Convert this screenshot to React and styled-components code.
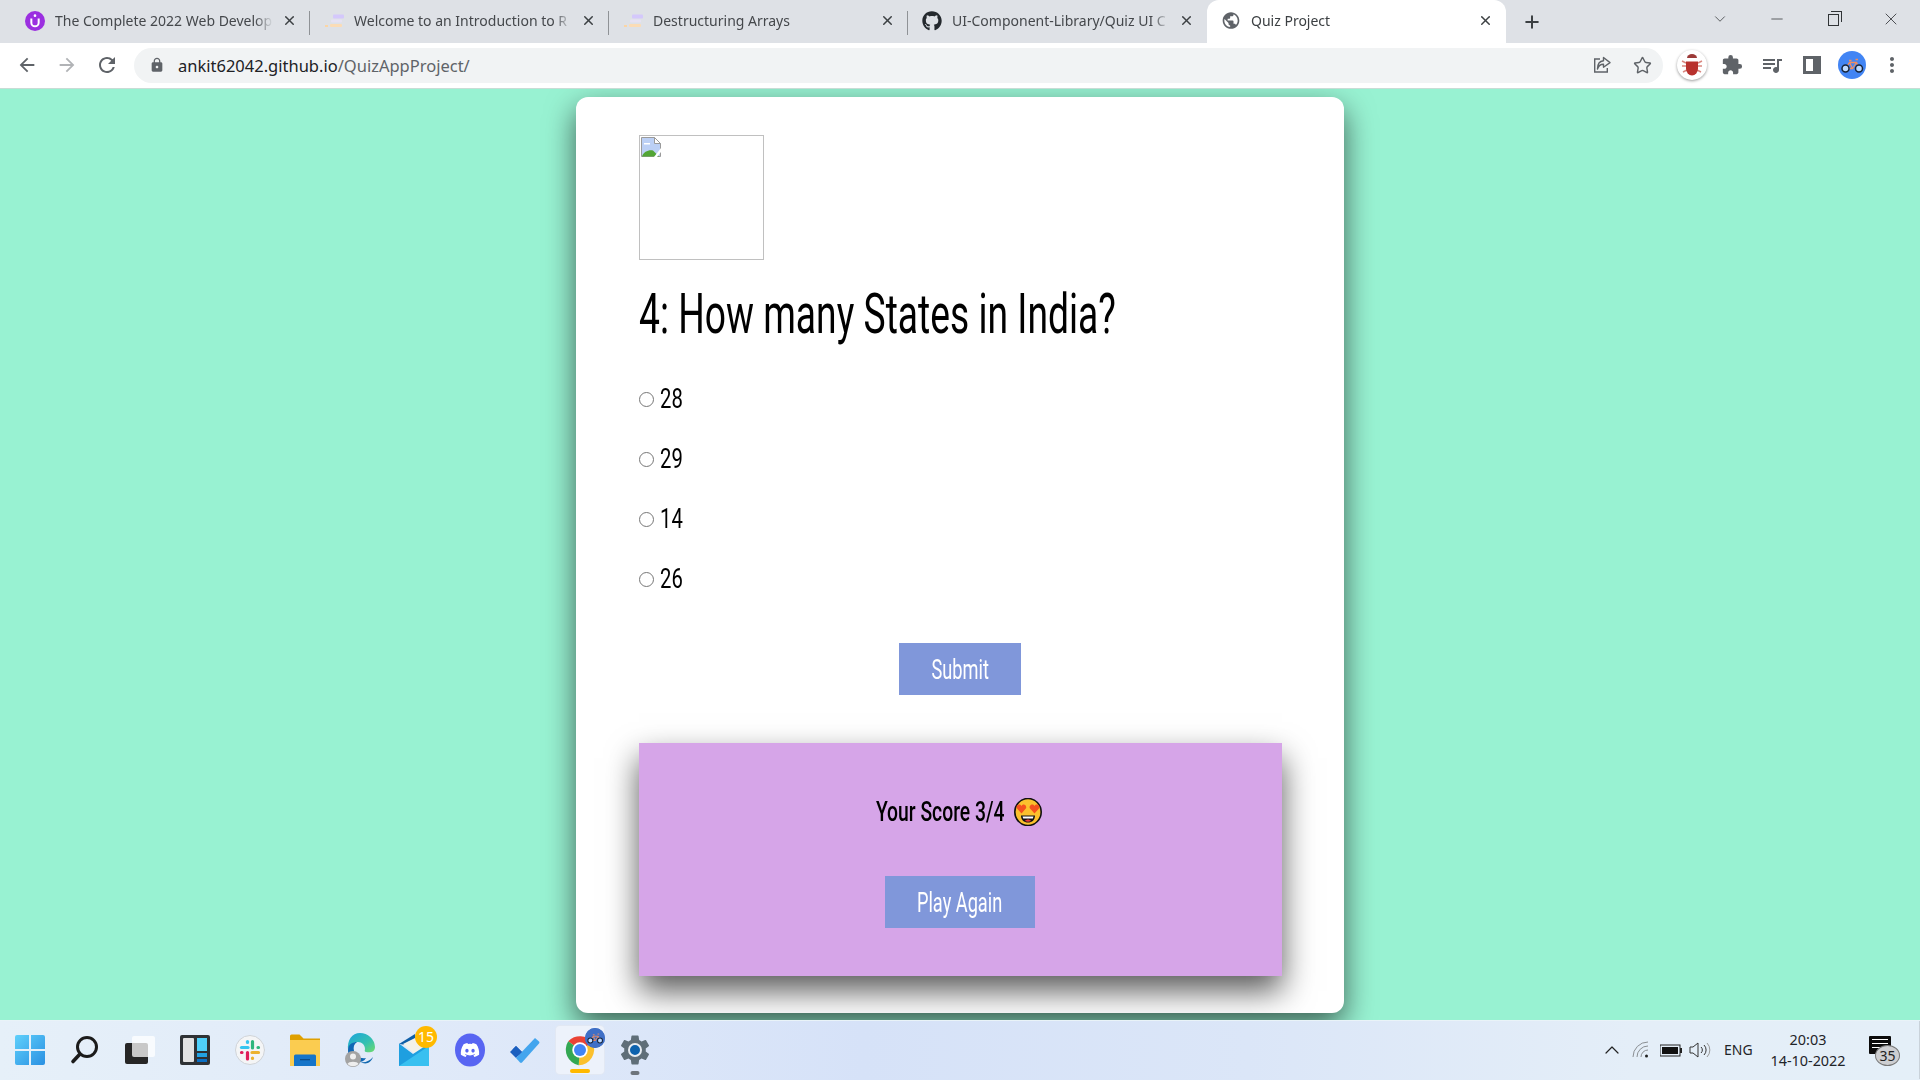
import React from "react";
import styled, { createGlobalStyle } from "styled-components";
import { X, Plus, Star, ChevronDown, ChevronUp, Minus } from "lucide-react";
import { FaGithub, FaDiscord } from "react-icons/fa";
import { MdArrowBack, MdArrowForward, MdRefresh, MdLock, MdExtension, MdQueueMusic, MdMoreVert, MdPublic, MdSettings } from "react-icons/md";

const Global = createGlobalStyle`
  html, body { margin: 0; padding: 0; width: 1920px; height: 1080px; overflow: hidden; }
  * { box-sizing: border-box; }
  body { font-family: "Noto Sans", "Open Sans", sans-serif; }
`;

const Page = styled.div`width:1920px;height:1080px;display:flex;flex-direction:column;overflow:hidden;`;
const TabStrip = styled.div`height:43px;background:#dee1e6;display:flex;padding-left:11px;flex:none;`;
const Tab = styled.div`
  position:relative;width:299px;height:43px;display:flex;align-items:center;padding:0 0 2px 14px;
  color:${p=>p.$active?"#3c4043":"#45484c"};
  background:${p=>p.$active?"#fff":"transparent"};
  border-radius:${p=>p.$active?"12px 12px 0 0":"0"};
  &::after{content:"";display:${p=>p.$sep?"block":"none"};position:absolute;right:0;top:11px;height:24px;width:1px;background:#8f9296;}
`;
const Fav = styled.span`width:20px;height:20px;display:flex;align-items:center;justify-content:center;flex:none;color:#5f6368;`;
const TabTitle = styled.span`
  margin-left:10px;width:218px;font-size:14px;white-space:nowrap;overflow:hidden;flex:none;
  -webkit-mask-image:linear-gradient(90deg,#000 calc(100% - 18px),transparent 100%);
  mask-image:linear-gradient(90deg,#000 calc(100% - 18px),transparent 100%);
`;
const TabClose = styled.span`display:flex;margin-left:9px;color:#3c4043;`;
const NewTab = styled.span`width:52px;display:flex;align-items:center;justify-content:center;color:#3c4043;`;
const StripRight = styled.div`margin-left:auto;display:flex;height:38px;align-items:center;color:#3c4043;padding-right:1px;`;
const WinBtn = styled.span`width:${p=>p.$w||57}px;display:flex;justify-content:center;color:#303336;`;
const Restore = styled.span`position:relative;width:11px;height:12px;display:block;border:1px solid #303336;margin-top:2px;
  &::before{content:"";position:absolute;left:2px;top:-4px;width:10px;height:10px;border:1px solid #303336;border-left:none;border-bottom:none;}
  &::after{content:"";position:absolute;left:2px;top:-4px;width:8px;height:3px;border-top:1px solid #303336;}
`;
const Toolbar = styled.div`height:46px;background:#fff;display:flex;align-items:center;padding-left:7px;flex:none;border-bottom:1px solid #c8dcd5;padding-bottom:1px;`;
const Slot = styled.span`width:${p=>p.$w||40}px;height:36px;display:flex;align-items:center;justify-content:center;flex:none;color:${p=>p.$c||"#5f6368"};`;
const Omni = styled.div`width:1529px;height:35px;margin:0 9px 0 7px;border-radius:18px;background:#f1f3f4;display:flex;align-items:center;padding-left:15px;flex:none;`;
const Url = styled.span`margin-left:13px;font-size:16.5px;color:#5f6368;`;
const Host = styled.span`color:#202124;`;
const OmniRight = styled.div`margin-left:auto;display:flex;margin-right:1px;`;
const BugDisc = styled.span`width:30px;height:30px;border-radius:50%;background:#fff;box-shadow:0 1px 3px rgba(0,0,0,.4);display:flex;align-items:center;justify-content:center;`;
const Main = styled.main`flex:1;background:#98f2d2;display:flex;justify-content:center;padding-top:8px;overflow:hidden;min-height:0;`;
const Card = styled.section`
  width:768px;height:916px;flex:none;background:#fff;border-radius:12px;padding:38px 62px 0 63px;
  box-shadow:0 12px 30px rgba(0,0,0,.6);
`;
const Broken = styled.div`width:125px;height:125px;border:1.5px solid #c0c0c0;padding:1px;display:flex;align-items:flex-start;`;
const Heading = styled.h1`margin:18px 0 0;height:72px;font:400 55px/72px Roboto,sans-serif;color:#000;white-space:nowrap;`;
const Squeeze = styled.span`display:inline-block;transform:scaleX(${p=>p.$x});transform-origin:${p=>p.$o||"left"} center;white-space:nowrap;`;
const Options = styled.div`margin-top:34px;display:flex;flex-direction:column;gap:30px;`;
const Option = styled.label`height:30px;display:flex;align-items:center;font:400 27px/30px Roboto,sans-serif;color:#000;`;
const Radio = styled.input`width:15px;height:15px;margin:0 6px 0 0;flex:none;`;
const Action = styled.div`display:flex;justify-content:center;padding-right:1px;`;
const Btn = styled.button`
  width:${p=>p.$w}px;height:52px;border:none;padding:2px 0 0;background:#8097da;color:#fff;
  font:400 28px/50px Roboto,sans-serif;display:flex;align-items:center;justify-content:center;
`;
const SubmitRow = styled(Action)`margin-top:49px;`;
const ScorePane = styled.div`
  margin-top:48px;height:233px;background:#d6a5e8;padding-top:52px;
  box-shadow:0 15px 30px rgba(0,0,0,.65);
`;
const ScoreLine = styled.div`display:flex;justify-content:center;align-items:center;height:34px;font:500 28px/34px Roboto,sans-serif;color:#000;padding-right:5px;`;
const ScoreText = styled.span`width:131px;display:flex;justify-content:center;margin-right:8px;`;
const AgainRow = styled(Action)`margin-top:47px;`;
const Taskbar = styled.footer`
  height:60px;flex:none;display:flex;align-items:center;padding:0 0 2px 2px;
  background:linear-gradient(90deg,#e6f0f9 0%,#dfe9f9 25%,#d6e2f8 45%,#dbe6f8 65%,#e4eef8 85%,#e4eff8 100%);
  border-top:1px solid #e9f3f8;
`;
const TaskIcon = styled.span`
  position:relative;width:55px;height:48px;flex:none;display:flex;align-items:center;justify-content:center;
`;
const ActiveTile = styled.span`position:absolute;left:4px;top:0;width:48px;height:48px;border-radius:4px;background:#edf2fb;box-shadow:0 0 0 1px #e2e8f3;`;
const Indicator = styled.span`position:absolute;bottom:${p=>p.$b}px;left:50%;transform:translateX(-50%);width:${p=>p.$w}px;height:3.5px;border-radius:2px;background:${p=>p.$c};`;
const MailBadge = styled.span`position:absolute;left:28px;top:0;width:22px;height:22px;border-radius:50%;background:#ffb900;color:#fff;font-size:14px;line-height:22px;text-align:center;`;
const ChromeBadge = styled.span`position:absolute;left:33px;top:2px;width:20px;height:20px;border-radius:50%;background:#3f6fc6;display:flex;align-items:center;justify-content:center;`;
const Tray = styled.div`margin-left:auto;display:flex;align-items:center;height:58px;border-right:1px solid #c9d2da;width:335px;padding-left:12px;font-size:14px;color:#1f2428;`;
const TrayIcon = styled.span`width:${p=>p.$w||29}px;display:flex;justify-content:center;flex:none;color:#222;`;
const Lang = styled.span`margin-left:10px;width:30px;flex:none;font-size:14px;`;
const Clock = styled.div`margin-left:15px;width:78px;text-align:center;font-size:14.4px;line-height:21px;flex:none;`;
const Notif = styled.span`position:relative;margin-left:22px;width:22px;height:18px;background:#0b0b0b;border-radius:1px;display:flex;flex-direction:column;gap:2.5px;padding:3px 3px;flex:none;margin-top:-10px;`;
const NotifLine = styled.span`height:1.5px;background:#fff;display:block;`;
const NotifBadge = styled.span`position:absolute;left:6px;top:9px;width:25px;height:21px;border-radius:50%;background:#cdced1;border:1px solid #777;font-size:14px;line-height:19px;text-align:center;color:#222;`;
const InnerDot = styled.span`position:absolute;left:11px;top:11px;width:14px;height:14px;border-radius:50%;background:#0d62ad;border:2px solid #e8edf2;`;
const GearWrap = styled.span`position:relative;display:flex;`;
const DiscordGlyph = styled.span`position:absolute;display:flex;left:17.5px;top:14px;`;
const ChromeWrap = styled.span`position:relative;display:flex;`;

const Udemy = () => (
  <svg width="20" height="20" viewBox="0 0 18 18"><circle cx="9" cy="9" r="9" fill="#9b2fe0"/><path d="M5.7 6.8v3.7a3.3 3.3 0 0 0 6.6 0V6.8" fill="none" stroke="#fff" strokeWidth="1.8"/><circle cx="9" cy="4.2" r="1.2" fill="#fff"/></svg>
);
const Stripes = () => (
  <svg width="20" height="18" viewBox="0 0 20 18"><rect x="9" y="2.5" width="11" height="4" rx="1" fill="#d4c8fb"/><rect x="7" y="7.5" width="11" height="3" rx="1" fill="#e6e2f3"/><rect x="6" y="12" width="12" height="3" rx="1" fill="#fbdcb6"/><rect x="1" y="13" width="3" height="2" fill="#fbd5a5"/></svg>
);
const Share = () => (
  <svg width="20" height="20" viewBox="0 0 20 20" fill="none" stroke="#5f6368" strokeWidth="1.4"><path d="M8 4H2.7v13h12.6v-4"/><path d="M11.5 2.5 18 7.6l-6.5 4.6V9.3C8.5 9.2 6.500 11 5.500 14c0-5 2.300-8 6-8.300z" strokeLinejoin="round"/></svg>
);
const SidePanel = () => (
  <svg width="18" height="18" viewBox="0 0 18 18"><path fillRule="evenodd" d="M0 0h18v18H0zM3 3v12h7V3z" fill="#5f6368"/></svg>
);
const Bug = () => (
  <svg width="22" height="24" viewBox="0 0 22 24" fill="none">
    <path d="M1 8l4 2M1 13h4M2 19l4-2M21 8l-4 2M21 13h-4M20 19l-4-2" stroke="#d98880" strokeWidth="1.5"/>
    <path d="M6 5a5 4 0 0 1 10 0z" fill="#9c3a38"/>
    <path d="M5 8.500h12v7a6 7 0 0 1-12 0z" fill="#b8322e"/>
  </svg>
);
const Bike = ({ s = 28, bg = "#4285f4" }) => (
  <svg width={s} height={s} viewBox="0 0 28 28">
    <circle cx="14" cy="14" r="14" fill={bg}/>
    <path d="M7.500 17.500l4-6h7l3 6M11.500 11.500l3 6h-7M17.500 8.500h2.500M11 9.500h2.500M18.500 11.500l-4 6" fill="none" stroke="#f08d60" strokeWidth="1.300"/>
    <circle cx="7.500" cy="17.500" r="3.500" fill="#bcd8ff" stroke="#16243a" strokeWidth="1.500"/><circle cx="21" cy="17.500" r="3.500" fill="#bcd8ff" stroke="#16243a" strokeWidth="1.500"/>
  </svg>
);
const BrokenImg = () => (
  <svg width="20" height="20" viewBox="0 0 20 20">
    <path d="M.5.5h13l6 6v13H.5z" fill="#bcd0f5" stroke="#9a9a9a"/>
    <path d="M13.500.5v6h6z" fill="#fff" stroke="#9a9a9a"/>
    <path d="M1 19.500c1.500-5 7-7 11-6l6 6z" fill="#52a535"/>
    <path d="M3 6h6v1.500H3z" fill="#fff"/>
    <path d="M20 11 13 20h3l4-5z" fill="#fff"/>
  </svg>
);
const Heart = () => (
  <svg width="28" height="28" viewBox="0 0 28 28">
    <ellipse cx="14" cy="14" rx="13.200" ry="13.500" fill="#fbc02d" stroke="#111" strokeWidth="1.600"/>
    <path d="M7.500 15.500 2.800 10.300C1.300 7.600 5.500 4.800 7.500 8 9.500 4.800 13.200 7.600 12 10.300z" fill="#f4511e"/>
    <path d="M20.500 15.500 15.800 10.300C14.600 7.600 18.500 4.800 20.500 8 22.500 4.800 26.700 7.600 25.200 10.300z" fill="#f4511e"/>
    <path d="M7 17.500h14c0 4.500-3 7-7 7s-7-2.500-7-7z" fill="#111"/>
    <path d="M8.500 18.500h11l-.7 2H9.200z" fill="#fff"/>
    <path d="M11 23c1-2 5-2 6 0-1.500 1-4.500 1-6 0z" fill="#e53935"/>
  </svg>
);
const Win = () => (
  <svg width="30" height="30" viewBox="0 0 30 30">
    <defs><linearGradient id="w1" x1="0" y1="0" x2="1" y2="1"><stop offset="0" stopColor="#5fd0fb"/><stop offset="1" stopColor="#2a90e2"/></linearGradient></defs>
    <path d="M2 0h12v14H0V2a2 2 0 0 1 2-2zM16 0h12a2 2 0 0 1 2 2v12H16zM0 16h14v14H2a2 2 0 0 1-2-2zM16 16h14v12a2 2 0 0 1-2 2H16z" fill="url(#w1)"/>
  </svg>
);
const Search = () => (
  <svg width="30" height="30" viewBox="0 0 30 30" fill="none" stroke="#1b1b1b"><circle cx="17" cy="12" r="9.500" strokeWidth="3"/><path d="M10 19 3 26.500" strokeWidth="3.600" strokeLinecap="round"/></svg>
);
const TaskView = () => (
  <svg width="30" height="28" viewBox="0 0 30 28"><rect x="0" y="7" width="23" height="21" rx="2" fill="#262626"/><rect x="7" y="0" width="23" height="21" rx="2" fill="#fff" opacity=".75"/></svg>
);
const Widgets = () => (
  <svg width="30" height="30" viewBox="0 0 30 30"><rect width="30" height="30" rx="2" fill="#2f3235"/><rect x="3" y="3" width="11" height="24" rx="1" fill="#e2e2e2"/><rect x="17" y="3" width="10" height="13" fill="#4fd1fb"/><rect x="17" y="18" width="10" height="4" fill="#22a2e2"/><rect x="17" y="24" width="10" height="3" fill="#0a6fc4"/></svg>
);
const Slack = () => (
  <svg width="30" height="30" viewBox="0 0 30 30" fill="none" strokeLinecap="round" strokeWidth="3.200">
    <circle cx="15" cy="15" r="14.500" fill="#f4f5f6" stroke="#cfd3d8" strokeWidth="1"/>
    <path d="M6.500 12.500h6.500" stroke="#36c5f0"/><path d="M12.500 6.500v1" stroke="#36c5f0"/>
    <path d="M17.500 6.500v6.500M23 12.500h.5" stroke="#2eb67d"/>
    <path d="M17 17.500h6.500M17.500 23v.5" stroke="#ecb22e"/>
    <path d="M12.500 17.500v6.500M6.500 17.500h.5" stroke="#e01e5a"/>
  </svg>
);
const Folder = () => (
  <svg width="30" height="32" viewBox="0 0 30 32"><path d="M0 2a1.500 1.500 0 0 1 1.500-1.500h8l4 4H30v4H0z" fill="#dfa000"/><path d="M0 6h30v26H0z" fill="#fbcc50"/><path d="M4 22a1.500 1.500 0 0 1 1.500-1.500h19A1.500 1.500 0 0 1 26 22v10H4z" fill="#1675c9"/><path d="M10 25h10v1.300H10z" fill="#0a4c8a"/></svg>
);
const Edge = () => (
  <svg width="32" height="36" viewBox="0 0 32 36">
    <defs><linearGradient id="e1" x1="0" y1="0" x2="1" y2="1"><stop offset="0" stopColor="#1aa3dd"/><stop offset=".6" stopColor="#35c1b0"/><stop offset="1" stopColor="#6fdc6a"/></linearGradient></defs>
    <path d="M16 1a15 15 0 0 1 15 14c0 5-5 6-9 5-2-.5-1-2-1-3 0-4-3-7-7-7-6 0-9 4-10 8C3 8 8 1 16 1z" fill="url(#e1)"/>
    <path d="M4 18c0-6 5-8 9-8-3 2-4 5-3 9 1 5 6 8 12 7-2 4-7 5-11 4-4-2-7-6-7-12z" fill="#0f67b5"/>
    <path d="M16 30c5 1 10-1 13-5-2 6-7 8-13 5z" fill="#1269b0"/>
    <circle cx="9" cy="27" r="8" fill="#a3a3a3"/><circle cx="9" cy="24.500" r="3" fill="#eee"/><path d="M3.500 32c1-3 10-3 11 0a8 8 0 0 1-11 0z" fill="#eee"/>
  </svg>
);
const Mail = () => (
  <svg width="32" height="32" viewBox="0 0 32 32">
    <path d="M0 10 16 0v12z" fill="#0f5fa8"/>
    <path d="M4 10 18 3l10 9-12 8z" fill="#f3f1ea"/>
    <path d="M0 9.500 14 20 30 9.500V32H0z" fill="#1e9fe0"/>
    <path d="M0 32 30 12V32z" fill="#38c0f0"/>
  </svg>
);
const DiscordDisc = () => (
  <svg width="30" height="34" viewBox="0 0 30 34"><ellipse cx="15" cy="17" rx="15" ry="16.500" fill="#5865f2"/></svg>
);
const Todo = () => (
  <svg width="30" height="26" viewBox="0 0 30 26"><path d="M0 15 6 9l6 6-6 6z" fill="#1b5fbf"/><path d="M6 21 25 1l4 3.500a1.500 1.500 0 0 1 0 2L12 25.500a1.500 1.500 0 0 1-2 0z" fill="#43a5ee"/><path d="m6 9 6 6-3.500 3.500-6-6z" fill="#1b5fbf"/></svg>
);
const Chrome = () => (
  <svg width="32" height="36" viewBox="0 0 24 26">
    <g transform="translate(0 1)">
    <path d="M12 12 3.170 5.400A12 12 0 0 1 21.530 6.500z" fill="#ea4335"/>
    <path d="M12 12 21.530 6.500A12 12 0 0 1 11 23.500z" fill="#fbc02d"/>
    <path d="M12 12 11 23.500A12 12 0 0 1 3.170 5.400z" fill="#34a853"/>
    <circle cx="12" cy="12" r="5.800" fill="#fff"/><circle cx="12" cy="12" r="4.500" fill="#4285f4"/>
    </g>
  </svg>
);
const Wifi = () => (
  <svg width="20" height="18" viewBox="0 0 20 18" fill="none" stroke="#8b8f93" strokeWidth="1"><path d="M1 16A15 15 0 0 1 16 1M5 16A11 11 0 0 1 16 5M9 16A7 7 0 0 1 16 9"/><circle cx="14.500" cy="15" r="1.500" fill="#222" stroke="none"/></svg>
);
const Battery = () => (
  <svg width="22" height="14" viewBox="0 0 22 14"><rect x="0" y="2" width="20" height="11" fill="none" stroke="#222"/><rect x="2" y="4" width="16" height="7" fill="#111"/><rect x="20" y="5" width="2" height="5" fill="#222"/></svg>
);
const Speaker = () => (
  <svg width="22" height="18" viewBox="0 0 22 18" fill="none" stroke="#333" strokeWidth="1"><path d="M1 6h3l5-4v14l-5-4H1z"/><path d="M12 6a4 4 0 0 1 0 6M15 4a7 7 0 0 1 0 10" /><path d="M18 2a10 10 0 0 1 0 14" stroke="#999"/></svg>
);

const tabs = [
  { t: "The Complete 2022 Web Develop", i: <Udemy />, sep: true },
  { t: "Welcome to an Introduction to R", i: <Stripes />, sep: true },
  { t: "Destructuring Arrays", i: <Stripes />, sep: true },
  { t: "UI-Component-Library/Quiz UI C", i: <FaGithub size={20} color="#24292e" /> },
  { t: "Quiz Project", i: <MdPublic size={21} />, active: true },
];

export default function App() {
  return (
    <Page>
      <Global />
      <TabStrip>
        {tabs.map((tab) => (
          <Tab key={tab.t} $active={tab.active} $sep={tab.sep}>
            <Fav>{tab.i}</Fav>
            <TabTitle>{tab.t}</TabTitle>
            <TabClose><X size={15} strokeWidth={2.4} /></TabClose>
          </Tab>
        ))}
        <NewTab><Plus size={20} strokeWidth={2.4} /></NewTab>
        <StripRight>
          <WinBtn $w={57}><ChevronDown size={18} strokeWidth={1} /></WinBtn>
          <WinBtn><Minus size={18} strokeWidth={1} /></WinBtn>
          <WinBtn><Restore /></WinBtn>
          <WinBtn><X size={20} strokeWidth={1} /></WinBtn>
        </StripRight>
      </TabStrip>
      <Toolbar>
        <Slot><MdArrowBack size={22} /></Slot>
        <Slot $c="#b1b3b6"><MdArrowForward size={22} /></Slot>
        <Slot><MdRefresh size={24} /></Slot>
        <Omni>
          <MdLock size={16} color="#5f6368" />
          <Url><Host>ankit62042.github.io</Host>/QuizAppProject/</Url>
          <OmniRight>
            <Slot><Share /></Slot>
            <Slot><Star size={19} strokeWidth={1.8} /></Slot>
          </OmniRight>
        </Omni>
        <Slot><BugDisc><Bug /></BugDisc></Slot>
        <Slot><MdExtension size={22} /></Slot>
        <Slot><MdQueueMusic size={24} /></Slot>
        <Slot><SidePanel /></Slot>
        <Slot><Bike /></Slot>
        <Slot><MdMoreVert size={24} /></Slot>
      </Toolbar>
      <Main>
        <Card>
          <Broken><BrokenImg /></Broken>
          <Heading><Squeeze $x={0.677}>4: How many States in India?</Squeeze></Heading>
          <Options>
            {["28", "29", "14", "26"].map((o) => (
              <Option key={o}>
                <Radio type="radio" name="q" />
                <Squeeze $x={0.75}>{o}</Squeeze>
              </Option>
            ))}
          </Options>
          <SubmitRow><Btn $w={122}><Squeeze $x={0.65} $o="center">Submit</Squeeze></Btn></SubmitRow>
          <ScorePane>
            <ScoreLine>
              <ScoreText><Squeeze $x={0.69} $o="center">Your Score 3/4</Squeeze></ScoreText>
              <Heart />
            </ScoreLine>
            <AgainRow><Btn $w={150}><Squeeze $x={0.65} $o="center">Play Again</Squeeze></Btn></AgainRow>
          </ScorePane>
        </Card>
      </Main>
      <Taskbar>
        <TaskIcon><Win /></TaskIcon>
        <TaskIcon><Search /></TaskIcon>
        <TaskIcon><TaskView /></TaskIcon>
        <TaskIcon><Widgets /></TaskIcon>
        <TaskIcon><Slack /></TaskIcon>
        <TaskIcon><Folder /></TaskIcon>
        <TaskIcon><Edge /></TaskIcon>
        <TaskIcon><Mail /><MailBadge>15</MailBadge></TaskIcon>
        <TaskIcon>
          <DiscordDisc />
          <DiscordGlyph><FaDiscord size={20} color="#fff" /></DiscordGlyph>
        </TaskIcon>
        <TaskIcon><Todo /></TaskIcon>
        <TaskIcon>
          <ActiveTile />
          <ChromeWrap><Chrome /></ChromeWrap>
          <ChromeBadge><Bike s={20} bg="#3f6fc6" /></ChromeBadge>
          <Indicator $b={1} $w={20} $c="#ffb900" />
        </TaskIcon>
        <TaskIcon>
          <GearWrap><MdSettings size={36} color="#5f6e78" /><InnerDot /></GearWrap>
          <Indicator $b={-1} $w={9} $c="#6e757c" />
        </TaskIcon>
        <Tray>
          <TrayIcon $w={30}><ChevronUp size={24} strokeWidth={1.2} /></TrayIcon>
          <TrayIcon><Wifi /></TrayIcon>
          <TrayIcon><Battery /></TrayIcon>
          <TrayIcon><Speaker /></TrayIcon>
          <Lang>ENG</Lang>
          <Clock>20:03<br />14-10-2022</Clock>
          <Notif>
            <NotifLine /><NotifLine /><NotifLine />
            <NotifBadge>35</NotifBadge>
          </Notif>
        </Tray>
      </Taskbar>
    </Page>
  );
}
